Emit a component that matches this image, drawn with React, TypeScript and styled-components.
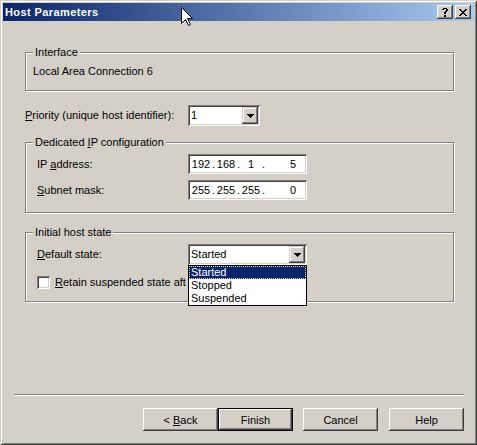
import React from 'react';
import styled, { createGlobalStyle } from 'styled-components';

// classic 3D palette
const FACE = '#d4d0c8';
const SHADOW = '#808080';
const DARK = '#404040';
const NAVY = '#0a246a';

const raised = `inset -1px -1px 0 ${DARK}, inset 1px 1px 0 #fff, inset -2px -2px 0 ${SHADOW}`;
const sunken = `inset 1px 1px 0 ${SHADOW}, inset -1px -1px 0 #fff, inset 2px 2px 0 ${DARK}, inset -2px -2px 0 ${FACE}`;

const GlobalStyle = createGlobalStyle`
  * { box-sizing: border-box; }
  html, body { margin: 0; padding: 0; background: ${FACE}; }
  body {
    font-family: "Liberation Sans", Arial, sans-serif;
    font-size: 11px;
    color: #000;
  }
  u { text-underline-offset: 1px; }
`;

const Frame = styled.div`
  position: relative;
  width: 477px;
  height: 445px;
  padding: 3px;
  display: flex;
  flex-direction: column;
  background: ${FACE};
  box-shadow: inset 1px 1px 0 ${FACE}, inset -1px -1px 0 ${DARK},
    inset 2px 2px 0 #fff, inset -2px -2px 0 ${SHADOW};
`;

const TitleBar = styled.div`
  height: 18px;
  display: flex;
  align-items: center;
  padding: 0 3px 0 2px;
  background: linear-gradient(to right, ${NAVY}, #a6caf0);
`;

const Title = styled.span`
  flex: 1;
  color: #fff;
  font-weight: bold;
  font-size: 11px;
  letter-spacing: 0.4px;
`;

const CaptionButton = styled.div<{ $gap?: number }>`
  width: 16px;
  height: 14px;
  margin-left: ${(p) => p.$gap || 0}px;
  display: flex;
  align-items: center;
  justify-content: center;
  background: ${FACE};
  box-shadow: ${raised};
  svg { display: block; }
`;

const Body = styled.div`
  flex: 1;
  display: flex;
  flex-direction: column;
`;

const Content = styled.div`
  display: flex;
  flex-direction: column;
  padding: 31px 0 0 22px;
`;

const Group = styled.div<{ $h: number; $top?: number; $pad?: string }>`
  position: relative;
  width: 429px;
  height: ${(p) => p.$h}px;
  margin-top: ${(p) => p.$top || 0}px;
  padding: ${(p) => p.$pad || '11px 0 0 11px'};
  border: 1px solid ${SHADOW};
  box-shadow: 1px 1px 0 #fff, inset 1px 1px 0 #fff;
  display: flex;
  flex-direction: column;
  gap: 6px;
`;

const Caption = styled.span`
  position: absolute;
  top: -7px;
  left: 7px;
  padding: 0 2px;
  line-height: 13px;
  background: ${FACE};
`;

const Row = styled.div<{ $top?: number }>`
  display: flex;
  align-items: center;
  margin-top: ${(p) => p.$top || 0}px;
`;

const Label = styled.span<{ $w: number }>`
  width: ${(p) => p.$w}px;
  line-height: 13px;
  white-space: nowrap;
  overflow: hidden;
`;

const Combo = styled.div<{ $w: number }>`
  position: relative;
  width: ${(p) => p.$w}px;
  height: 21px;
  padding: 2px;
  display: flex;
  background: #fff;
  box-shadow: ${sunken};
`;

const ComboText = styled.span`
  flex: 1;
  padding-left: 1px;
  line-height: 17px;
`;

const ComboButton = styled.div`
  width: 16px;
  height: 17px;
  display: flex;
  align-items: center;
  justify-content: center;
  background: ${FACE};
  box-shadow: inset -1px -1px 0 ${DARK}, inset 1px 1px 0 ${FACE},
    inset -2px -2px 0 ${SHADOW}, inset 2px 2px 0 #fff;
  svg { display: block; }
`;

const DropList = styled.ul`
  position: absolute;
  top: 100%;
  left: 0;
  right: 0;
  z-index: 2;
  margin: 0;
  padding: 0;
  list-style: none;
  background: #fff;
  border: 1px solid #000;
`;

const DropItem = styled.li<{ $active?: boolean }>`
  height: 13px;
  line-height: 13px;
  padding-left: 2px;
  color: ${(p) => (p.$active ? '#fff' : '#000')};
  background: ${(p) => (p.$active ? NAVY : 'transparent')};
  outline: ${(p) => (p.$active ? '1px dotted #e8e4b0' : 'none')};
  outline-offset: -1px;
`;

const IpBox = styled.div`
  width: 119px;
  height: 20px;
  padding: 2px 2px 2px 3px;
  display: flex;
  align-items: center;
  background: #fff;
  box-shadow: ${sunken};
`;

const Octet = styled.span<{ $w: number; $last?: boolean }>`
  width: ${(p) => p.$w}px;
  text-align: ${(p) => (p.$last ? 'right' : 'center')};
  padding-right: ${(p) => (p.$last ? 6 : 0)}px;
`;

const Dot = styled.span`
  width: 5px;
  text-align: center;
`;

const CheckBox = styled.span`
  width: 13px;
  height: 13px;
  margin-right: 5px;
  background: #fff;
  box-shadow: ${sunken};
`;

const Footer = styled.div`
  margin-top: auto;
  padding: 0 10px 11px 11px;
`;

const Separator = styled.div`
  height: 2px;
  border-top: 1px solid ${SHADOW};
  border-bottom: 1px solid #fff;
`;

const ButtonRow = styled.div`
  display: flex;
  justify-content: flex-end;
  margin-top: 12px;
`;

const PushButton = styled.button<{ $gap?: number; $default?: boolean }>`
  width: 75px;
  height: 23px;
  margin: 0 0 0 ${(p) => p.$gap || 0}px;
  padding: 0;
  font: inherit;
  color: #000;
  background: ${FACE};
  border: ${(p) => (p.$default ? '1px solid #000' : 'none')};
  box-shadow: ${raised};
`;

const Pointer = styled.svg`
  position: absolute;
  left: 181px;
  top: 7px;
`;

const octets = (vals: string[]) =>
  vals.map((v, i) => (
    <React.Fragment key={i}>
      {i > 0 && <Dot>.</Dot>}
      <Octet $w={i === 3 ? 36 : 20} $last={i === 3}>{v}</Octet>
    </React.Fragment>
  ));

const DownArrow = () => (
  <svg width="7" height="4" viewBox="0 0 7 4">
    <path d="M0 0h7v1h-1v1h-1v1h-1v1h-1v-1h-1v-1h-1v-1h-1z" fill="#000" />
  </svg>
);

const HelpGlyph = () => (
  <svg width="6" height="9" viewBox="0 0 6 9" shapeRendering="crispEdges">
    <path d="M1 0h4v1h1v2h-1v1h-1v2h-2v-2h1v-1h1v-2h-2v1h-2v-1h1z M2 7h2v2h-2z" fill="#000" />
  </svg>
);

const CloseGlyph = () => (
  <svg width="8" height="7" viewBox="0 0 8 7" shapeRendering="crispEdges" fill="#000">
    <rect x="0" y="0" width="2" height="1" />
    <rect x="6" y="0" width="2" height="1" />
    <rect x="1" y="1" width="2" height="1" />
    <rect x="5" y="1" width="2" height="1" />
    <rect x="2" y="2" width="4" height="1" />
    <rect x="3" y="3" width="2" height="1" />
    <rect x="2" y="4" width="4" height="1" />
    <rect x="1" y="5" width="2" height="1" />
    <rect x="5" y="5" width="2" height="1" />
    <rect x="0" y="6" width="2" height="1" />
    <rect x="6" y="6" width="2" height="1" />
  </svg>
);

export default function App(): JSX.Element {
  const states = ['Started', 'Stopped', 'Suspended'];

  return (
    <>
      <GlobalStyle />
      <Frame>
        <TitleBar>
          <Title>Host Parameters</Title>
          <CaptionButton><HelpGlyph /></CaptionButton>
          <CaptionButton $gap={2}><CloseGlyph /></CaptionButton>
        </TitleBar>

        <Body>
          <Content>
            <Group $h={39} $pad="12px 0 0 7px">
              <Caption>Interface</Caption>
              <span>Local Area Connection 6</span>
            </Group>

            <Row $top={14}>
              <Label $w={163}><u>P</u>riority (unique host identifier):</Label>
              <Combo $w={72}>
                <ComboText>1</ComboText>
                <ComboButton><DownArrow /></ComboButton>
              </Combo>
            </Row>

            <Group $h={71} $top={16}>
              <Caption>Dedicated <u>I</u>P configuration</Caption>
              <Row>
                <Label $w={151}>IP <u>a</u>ddress:</Label>
                <IpBox>{octets(['192', '168', '1', '5'])}</IpBox>
              </Row>
              <Row>
                <Label $w={151}><u>S</u>ubnet mask:</Label>
                <IpBox>{octets(['255', '255', '255', '0'])}</IpBox>
              </Row>
            </Group>

            <Group $h={70} $top={19}>
              <Caption>Initial host state</Caption>
              <Row>
                <Label $w={151}><u>D</u>efault state:</Label>
                <Combo $w={119}>
                  <ComboText>Started</ComboText>
                  <ComboButton><DownArrow /></ComboButton>
                  <DropList>
                    {states.map((s, i) => (
                      <DropItem key={s} $active={i === 0}>{s}</DropItem>
                    ))}
                  </DropList>
                </Combo>
              </Row>
              <Row $top={5}>
                <CheckBox />
                <Label $w={131}><u>R</u>etain suspended state after reboot</Label>
              </Row>
            </Group>
          </Content>

          <Footer>
            <Separator />
            <ButtonRow>
              <PushButton>&lt; <u>B</u>ack</PushButton>
              <PushButton $default>Finish</PushButton>
              <PushButton $gap={10}>Cancel</PushButton>
              <PushButton $gap={11}>Help</PushButton>
            </ButtonRow>
          </Footer>
        </Body>

        <Pointer width="13" height="20" viewBox="0 0 13 20">
          <path
            d="M0.5 0.5 L0.5 16.5 L4.5 12.5 L7.5 18.5 L9.5 17.5 L6.5 11.5 L11.5 11.5 Z"
            fill="#fff"
            stroke="#000"
            strokeWidth="1"
          />
        </Pointer>
      </Frame>
    </>
  );
}
